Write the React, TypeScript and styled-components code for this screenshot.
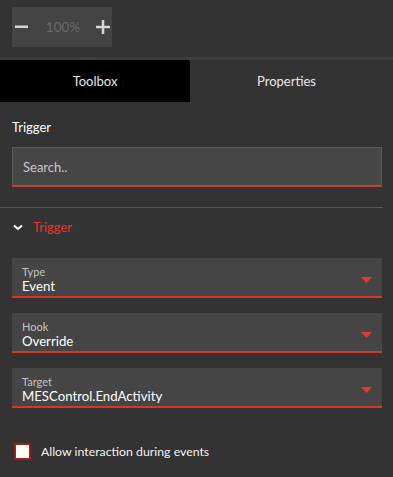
import React from "react";
import styled, { createGlobalStyle } from "styled-components";

const Global = createGlobalStyle`
  html, body { margin: 0; padding: 0; background: #333333; }
  body { font-family: Lato, "Noto Sans", sans-serif; color: #fff; }
  * { box-sizing: border-box; }
`;

const Page = styled.div`
  width: 393px;
  height: 477px;
  background: #333333;
  display: flex;
  flex-direction: column;
  overflow: hidden;
`;

const TopBar = styled.div`
  padding: 7px 12px 10px;
  border-bottom: 3px solid #3e3e3e;
  box-sizing: content-box;
  height: 40px;
`;

const Zoom = styled.div`
  width: 100px;
  height: 40px;
  background: #444444;
  display: flex;
  align-items: center;
  justify-content: space-between;
  padding: 0 2px 0 3px;
`;

const ZoomBtn = styled.span`
  width: 14px;
  height: 14px;
  display: flex;
  align-items: center;
  justify-content: center;
`;

const ZoomValue = styled.span`
  color: #6a6a6a;
  font-size: 13.5px;
  margin-left: 1px;
`;

const Tabs = styled.div`
  display: flex;
  height: 42px;
  padding-right: 10px;
`;

const Tab = styled.div<{ $active?: boolean }>`
  width: ${(p) => (p.$active ? "190px" : "auto")};
  flex: ${(p) => (p.$active ? "none" : "1")};
  background: ${(p) => (p.$active ? "#000" : "transparent")};
  border-top-right-radius: ${(p) => (p.$active ? "2px" : "0")};
  display: flex;
  align-items: center;
  justify-content: center;
  font-size: 13px;
  color: #e8e8e8;
`;

const Section = styled.div`
  padding: 0 11px 0 12px;
`;

const Heading = styled.div`
  font-size: 13px;
  color: #fff;
  padding-top: 17px;
  height: 45px;
`;

const Search = styled.div`
  height: 40px;
  background: #464646;
  border: 1px solid #5c5c5c;
  border-bottom: 2px solid #c8412f;
  display: flex;
  align-items: center;
  padding-left: 10px;
  font-size: 13px;
  color: #c8c8c8;
`;

const Divider = styled.div`
  height: 1px;
  background: #585858;
  margin-top: 20px;
  margin-right: 10px;
`;

const GroupHeader = styled.div`
  display: flex;
  align-items: center;
  gap: 10px;
  padding: 0 0 0 1px;
  height: 38px;
  font-size: 13px;
  color: #e23a2b;
`;

const Field = styled.div`
  height: 40px;
  background: #454545;
  border-bottom: 2px solid #d8362a;
  padding: 6px 10px 0 10px;
  display: flex;
  align-items: center;
  justify-content: space-between;
  margin-bottom: 15px;
`;

const FieldText = styled.div`
  display: flex;
  flex-direction: column;
`;

const FieldLabel = styled.span`
  font-size: 11px;
  color: #c4c4c4;
  line-height: 13px;
`;

const FieldValue = styled.span`
  font-size: 13.2px;
  color: #fff;
  line-height: 17px;
`;

const Fields = styled.div`
  padding-top: 12px;
`;

const CheckRow = styled.label`
  display: flex;
  align-items: center;
  gap: 10px;
  padding: 20px 0 0 2px;
  font-size: 12.3px;
  color: #f2f2f2;
`;

const Box = styled.span`
  width: 17px;
  height: 17px;
  background: #fff;
  border: 2px solid #a01f16;
  border-radius: 1px;
`;

const Chevron = () => (
  <svg width="10" height="7" viewBox="0 0 10 7">
    <path d="M1 1.5 L5 5 L9 1.5" stroke="#fff" strokeWidth="2" fill="none" />
  </svg>
);

const Caret = () => (
  <svg width="11" height="6" viewBox="0 0 11 6">
    <path d="M0 0 H11 L5.5 6 Z" fill="#e53a2b" />
  </svg>
);

const Minus = () => (
  <svg width="14" height="14" viewBox="0 0 14 14">
    <rect x="0" y="5.5" width="13" height="2.5" fill="#d6d6d6" />
  </svg>
);

const Plus = () => (
  <svg width="14" height="14" viewBox="0 0 14 14">
    <rect x="0" y="5.75" width="14" height="2.5" fill="#d6d6d6" />
    <rect x="5.75" y="0" width="2.5" height="14" fill="#d6d6d6" />
  </svg>
);

const fields = [
  { label: "Type", value: "Event" },
  { label: "Hook", value: "Override" },
  { label: "Target", value: "MESControl.EndActivity" },
];

export default function App() {
  return (
    <Page>
      <Global />
      <TopBar>
        <Zoom>
          <ZoomBtn>
            <Minus />
          </ZoomBtn>
          <ZoomValue>100%</ZoomValue>
          <ZoomBtn>
            <Plus />
          </ZoomBtn>
        </Zoom>
      </TopBar>
      <Tabs>
        <Tab $active>Toolbox</Tab>
        <Tab>Properties</Tab>
      </Tabs>
      <Section>
        <Heading>Trigger</Heading>
        <Search>Search..</Search>
      </Section>
      <Divider />
      <Section>
        <GroupHeader>
          <Chevron />
          <span>Trigger</span>
        </GroupHeader>
        <Fields>
          {fields.map((f) => (
            <Field key={f.label}>
              <FieldText>
                <FieldLabel>{f.label}</FieldLabel>
                <FieldValue>{f.value}</FieldValue>
              </FieldText>
              <Caret />
            </Field>
          ))}
        </Fields>
        <CheckRow>
          <Box />
          <span>Allow interaction during events</span>
        </CheckRow>
      </Section>
    </Page>
  );
}
